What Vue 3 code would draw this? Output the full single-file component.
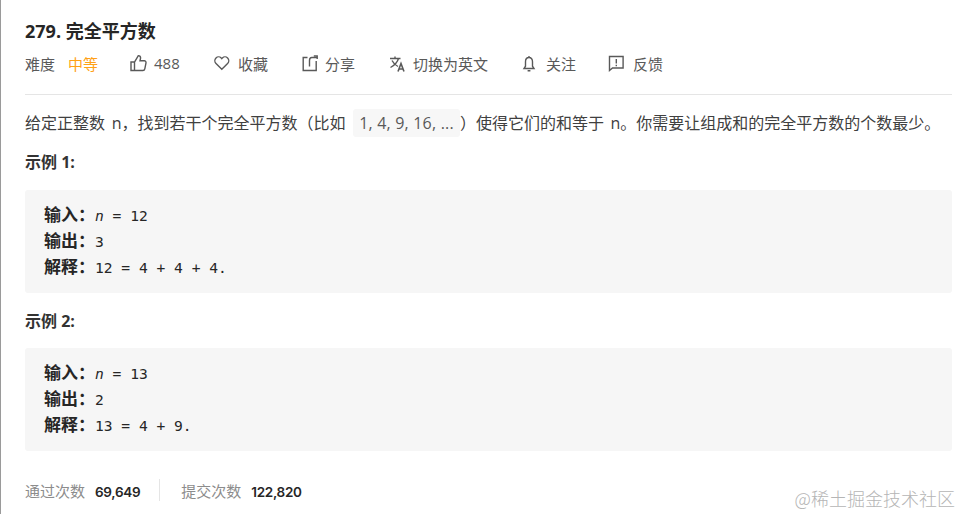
<template>
  <div class="page">
    <h1 class="title">279. 完全平方数</h1>
    <div class="meta">
      <span class="label">难度</span>
      <span class="level">中等</span>
      <span class="action like">
        <svg viewBox="0 0 18 18" class="icon"><path d="M1 8h3.500v8.500H1zM4.500 8.200 8.300 1.600c1.400 0 2.300 1 2.300 2.300L10 6.800h4.300c1.100 0 1.900 1 1.700 2l-1.200 6c-.2 1-1 1.700-1.900 1.700H4.500" /></svg>
        <span>488</span>
      </span>
      <span class="action fav">
        <svg viewBox="0 0 18 18" class="icon"><path d="M7.800 15.200 2 9.400a3.900 3.900 0 0 1 0-5.500 3.700 3.700 0 0 1 5.200 0l.6.700.6-.7a3.700 3.700 0 0 1 5.200 0 3.900 3.900 0 0 1 0 5.500z" /></svg>
        <span>收藏</span>
      </span>
      <span class="action share">
        <svg viewBox="0 0 18 18" class="icon"><path d="M6.500 3.500H2.200v13h13V7M8.500 12.500V6.500c0-1.600.8-3 2.300-3h5.400" /><path d="M12.800 2h3.400v3" /></svg>
        <span>分享</span>
      </span>
      <span class="action lang">
        <svg viewBox="0 0 18 18" class="icon"><path d="M2 4.500h10.500M7 2.500v2M10.500 4.500C9.500 8 7 11 2.500 13.500M4 6.500C5.500 9.500 7.500 11.200 10 12.500" /><path class="bold" d="M10 17.500l3-8 3 8M11 15h4" /></svg>
        <span>切换为英文</span>
      </span>
      <span class="action follow">
        <svg viewBox="0 0 18 18" class="icon"><path d="M7 3.500c-2.300 0-3.500 1.800-3.500 4.200v4.500L2 14.500h10l-1.500-2.300V7.700c0-2.400-1.200-4.200-3.500-4.200zM7 2v1.500M5.600 16.800h2.800" /></svg>
        <span>关注</span>
      </span>
      <span class="action report">
        <svg viewBox="0 0 18 18" class="icon"><path d="M1.500 2.500h13.600v11.500H4.500l-3 2.500zM8.300 5v4.500M8.300 10.800v1.400" /></svg>
        <span>反馈</span>
      </span>
    </div>

    <div class="content">
      <p class="desc">给定正整数 n，找到若干个完全平方数（比如 <code class="chip">1, 4, 9, 16, ...</code>）使得它们的和等于 n。你需要让组成和的完全平方数的个数最少。</p>

      <template v-for="ex in examples" :key="ex.title">
        <h2 class="ex-title">{{ ex.title }}</h2>
        <div class="ex-box">
          <div class="ex-line"><b>输入：</b><i>n</i> = {{ ex.n }}</div>
          <div class="ex-line"><b>输出：</b>{{ ex.out }}</div>
          <div class="ex-line"><b>解释：</b>{{ ex.why }}</div>
        </div>
      </template>
    </div>

    <div class="stats">
      <span class="stat"><span class="stat-label">通过次数</span><strong>69,649</strong></span>
      <span class="sep"></span>
      <span class="stat"><span class="stat-label">提交次数</span><strong>122,820</strong></span>
    </div>
    <div class="watermark">@稀土掘金技术社区</div>
  </div>
</template>

<script setup>
const examples = [
  { title: '示例 1:', n: 12, out: 3, why: '12 = 4 + 4 + 4.' },
  { title: '示例 2:', n: 13, out: 2, why: '13 = 4 + 9.' }
]
</script>

<style>
html, body {
  margin: 0;
  background: #fff;
  overflow: hidden;
}
</style>

<style scoped>
.page {
  position: relative;
  box-sizing: border-box;
  width: 961px;
  height: 514px;
  padding: 0 9px 0 24px;
  border-left: 1px solid #9a9a9a;
  font-family: "Open Sans", "Noto Sans CJK SC", sans-serif;
  color: #262626;
  overflow: hidden;
}

.title {
  margin: 0;
  padding-top: 20px;
  font-size: 18px;
  line-height: 22px;
  font-weight: 700;
  color: #262626;
}

.meta {
  display: flex;
  align-items: center;
  height: 24px;
  margin-top: 9px;
  font-size: 15px;
  color: #595959;
}

.label { width: 43px; }
.level { width: 62px; color: #ffa116; }

.action {
  display: flex;
  align-items: center;
  gap: 6px;
}

.icon {
  width: 18px;
  height: 18px;
  fill: none;
  stroke: #595959;
  stroke-width: 1.4;
}

.icon .bold { stroke-width: 1.6; }

.like { width: 84px; }
.fav { width: 87px; }
.share { width: 87px; }
.lang { width: 134px; gap: 7px; }
.follow { width: 86px; }
.report { gap: 7px; }

.content {
  margin-top: 19px;
  padding-top: 15px;
  border-top: 1px solid #e5e5e5;
}

.desc {
  margin: 0;
  font-size: 16px;
  line-height: 26px;
  color: #404040;
  white-space: nowrap;
  word-spacing: 2.500px;
}

.chip {
  margin: 0 0 0 1px;
  padding: 3px 6px;
  border-radius: 3px;
  background: #f7f7f7;
  color: #595959;
  font-family: inherit;
  font-size: 16px;
  letter-spacing: 0.2px;
  word-spacing: 0;
}

.ex-title {
  margin: 13px 0 15px;
  font-size: 16px;
  line-height: 26px;
  font-weight: 700;
  color: #333;
}

.ex-box {
  box-sizing: border-box;
  height: 103px;
  padding: 13px 19px;
  border-radius: 3px;
  background: #f6f6f6;
  font-family: "DejaVu Sans Mono", "Noto Sans CJK SC", monospace;
  font-size: 14.600px;
  color: #262626;
}

.ex-line {
  height: 26px;
  line-height: 26px;
  white-space: pre;
}

.ex-box b {
  font-family: "Noto Sans CJK SC", sans-serif;
  font-size: 17px;
  line-height: 1;
}

.ex-box + .ex-title {
  margin-top: 15px;
  margin-bottom: 14px;
}

.stats {
  display: flex;
  align-items: center;
  margin-top: 28px;
  height: 22px;
  font-size: 15px;
}

.stat-label { color: #8c8c8c; margin-right: 10px; }
.stat strong {
  font-family: Inter, sans-serif;
  font-size: 13.500px;
  font-weight: 600;
  letter-spacing: -0.3px;
  color: #262626;
}

.sep {
  width: 1px;
  height: 22px;
  margin: 0 21px 0 19px;
  background: #e5e5e5;
}

.watermark {
  position: absolute;
  right: 6px;
  bottom: 6px;
  font-size: 18px;
  line-height: 20px;
  color: #b5b5b5;
  font-family: "Noto Sans CJK SC", sans-serif;
  font-weight: 300;
}
</style>
